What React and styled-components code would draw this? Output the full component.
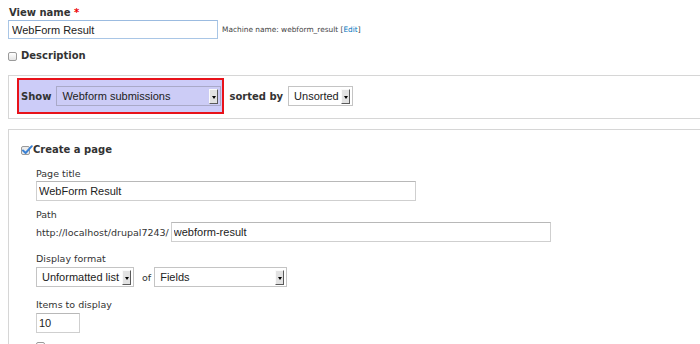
import React from 'react';
import styled, { createGlobalStyle } from 'styled-components';

// -------------- CSS Style -------------- //
const Global = createGlobalStyle`
    html, body {
        margin: 0;
        padding: 0;
        background: #fff;
        overflow: hidden;
    }
    body {
        font-family: "DejaVu Sans", sans-serif;
        color: #333;
    }
`;

const Page = styled.div`
    width: 760px;
    height: 344px;
    overflow: hidden;
    padding: 6px 0 0 8px;
`;

const BoldLabel = styled.div`
    font-size: 10px;
    font-weight: bold;
    line-height: 14px;
    color: #333;
    padding-left: ${p => (p.$flush ? 0 : 1)}px;
`;

const Star = styled.span`
    color: #e00;
`;

const NameRow = styled.div`
    display: flex;
    align-items: center;
    gap: 4px;
`;

const TextInput = styled.input`
    box-sizing: border-box;
    display: block;
    margin: 0;
    width: ${p => p.$w}px;
    height: ${p => p.$h || 20}px;
    padding: 0 ${p => p.$pad || 2}px;
    border: 1px solid ${p => (p.$focus ? '#a9c6e6' : '#cfcfcf')};
    border-top-color: ${p => (p.$focus ? '#9bbbe0' : '#b8b8b8')};
    background: #fff;
    font: 11px "Liberation Sans", Arial, sans-serif;
    color: #222;
    outline: none;
`;

const Hint = styled.span`
    font-size: 7.4px;
    color: #444;
    a {
        color: #0074bd;
        text-decoration: none;
    }
`;

const CheckRow = styled.div`
    display: flex;
    align-items: center;
    gap: ${p => p.$gap || 0}px;
    margin-top: ${p => p.$mt || 0}px;
`;

const Box = styled.span`
    box-sizing: border-box;
    display: inline-block;
    width: 9px;
    height: 9px;
    border: 1px solid #9a9a9a;
    border-radius: 2px;
    background: linear-gradient(#fff, #e4e4e4);
`;

const Fieldset = styled.div`
    border: 1px solid #d6d6d6;
    margin-top: ${p => p.$mt || 0}px;
    padding: ${p => p.$pad};
`;

const ShowBar = styled.div`
    display: flex;
    align-items: center;
`;

const Highlight = styled.div`
    display: flex;
    align-items: center;
    gap: 5px;
    height: 32px;
    padding: 0 1px 0 2px;
    border: 2px solid #e8121a;
    background: #ccccf8;
`;

const InlineLabel = styled.span`
    font-size: 10px;
    font-weight: bold;
    color: #333;
    margin-left: ${p => p.$ml || 0}px;
    margin-right: ${p => p.$mr || 0}px;
`;

const SelectBox = styled.div`
    box-sizing: border-box;
    display: inline-flex;
    align-items: center;
    width: ${p => p.$w}px;
    height: ${p => p.$h || 20}px;
    padding-left: ${p => p.$pad || 5}px;
    border: 1px solid ${p => (p.$tint ? '#a9a9c8' : '#c4c4c4')};
    background: ${p => (p.$tint ? '#ccccf6' : '#fff')};
    font: 11px "Liberation Sans", Arial, sans-serif;
    color: #222;
`;

const SelectText = styled.span`
    flex: 1;
    white-space: nowrap;
    overflow: hidden;
`;

const Arrow = styled.span`
    box-sizing: border-box;
    display: flex;
    align-items: center;
    justify-content: center;
    width: 9px;
    height: 15px;
    margin-right: 2px;
    border: 1px solid;
    border-color: #fafafa #5a5a5a #5a5a5a #fafafa;
    background: #e2e2e2;
    &::after {
        content: "";
        border-left: 2.5px solid transparent;
        border-right: 2.5px solid transparent;
        border-top: 3px solid #000;
        margin-top: 2px;
    }
`;

const Fields = styled.div`
    padding-left: 15px;
`;

const Field = styled.div`
    margin-top: ${p => p.$mt || 10}px;
`;

const Label = styled.div`
    font-size: 9.5px;
    line-height: 14px;
    color: #333;
`;

const Control = styled.div`
    display: flex;
    align-items: center;
    gap: ${p => p.$gap || 0}px;
    margin-top: ${p => p.$mt || 0}px;
`;

const Plain = styled.span`
    font-size: 9.5px;
    color: #333;
    margin: ${p => p.$m || 0};
`;

const Select = ({ w, tint, children }) => (
    <SelectBox $w={w} $tint={tint}>
        <SelectText>{children}</SelectText>
        <Arrow />
    </SelectBox>
);

const CheckedBox = () => (
    <svg width="12" height="11" viewBox="0 0 12 11">
        <rect x="0.5" y="1.5" width="8" height="8" rx="1.5" fill="#ececec" stroke="#9a9a9a" />
        <path d="M2 5.5 L4.6 8 L10.8 1.2" fill="none" stroke="#3c82d4" strokeWidth="2" strokeLinecap="round" strokeLinejoin="round" />
    </svg>
);

const App = () => {
    return (
        <>
            <Global />
            <Page>
                <BoldLabel>View name <Star>*</Star></BoldLabel>
                <NameRow>
                    <TextInput $w={210} $h={19} $pad={3} $focus defaultValue="WebForm Result" readOnly />
                    <Hint>Machine name: webform_result [<a href="#edit">Edit</a>]</Hint>
                </NameRow>

                <CheckRow $mt={10} $gap={3}>
                    <Box />
                    <BoldLabel>Description</BoldLabel>
                </CheckRow>

                <Fieldset $mt={12} $pad="2px 8px 4px">
                    <ShowBar>
                        <Highlight>
                            <InlineLabel>Show</InlineLabel>
                            <Select w={165} tint>Webform submissions</Select>
                        </Highlight>
                        <InlineLabel $ml={5} $mr={5}>sorted by</InlineLabel>
                        <Select w={65}>Unsorted</Select>
                    </ShowBar>
                </Fieldset>

                <Fieldset $mt={10} $pad="13px 12px 20px">
                    <CheckRow>
                        <CheckedBox />
                        <BoldLabel $flush>Create a page</BoldLabel>
                    </CheckRow>
                    <Fields>
                        <Field $mt={10}>
                            <Label>Page title</Label>
                            <Control>
                                <TextInput $w={380} defaultValue="WebForm Result" readOnly />
                            </Control>
                        </Field>
                        <Field $mt={7}>
                            <Label>Path</Label>
                            <Control $gap={2}>
                                <Plain>http://localhost/drupal7243/</Plain>
                                <TextInput $w={380} defaultValue="webform-result" readOnly />
                            </Control>
                        </Field>
                        <Field $mt={10}>
                            <Label>Display format</Label>
                            <Control $mt={1}>
                                <Select w={98}>Unformatted list</Select>
                                <Plain $m="0 3px 0 8px">of</Plain>
                                <Select w={133}>Fields</Select>
                            </Control>
                        </Field>
                        <Field $mt={11}>
                            <Label>Items to display</Label>
                            <Control $mt={1}>
                                <TextInput $w={44} defaultValue="10" readOnly />
                            </Control>
                        </Field>
                        <CheckRow $mt={9}>
                            <Box />
                        </CheckRow>
                    </Fields>
                </Fieldset>
            </Page>
        </>
    );
};

export default App;
